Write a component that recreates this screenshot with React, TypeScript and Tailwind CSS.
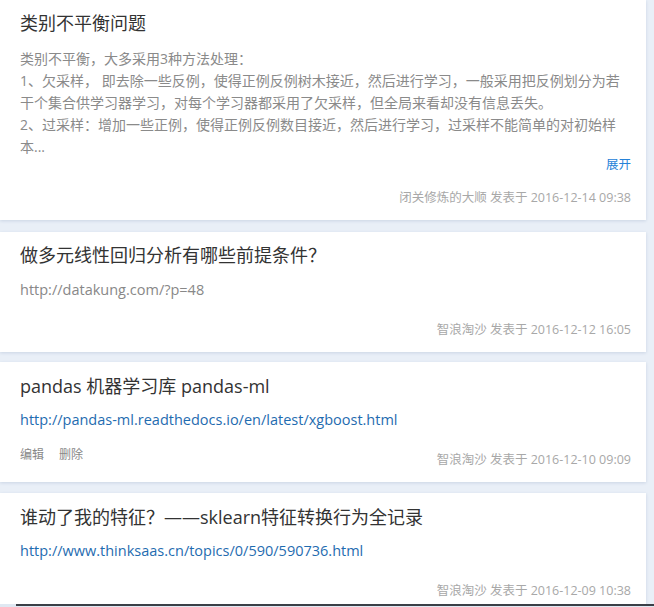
import React from "react";

const font = { fontFamily: '"Open Sans", "Noto Sans CJK SC", sans-serif' };

function Footer({ text }: { text: string }) {
  return <div className="text-[12.5px] leading-[20px] text-[#a8a8a8] text-right">{text}</div>;
}

export default function App() {
  return (
    <div className="relative w-[654px] h-[607px] overflow-hidden bg-[#e9eff7]" style={font}>
      <div className="w-[646px] flex flex-col">
        {/* Card 1 */}
        <div className="bg-white pl-5 pr-[15px] pt-[11px] pb-[12px] shadow-[0_1px_3px_rgba(30,70,130,0.15)]">
          <div className="text-[18px] leading-[25px] text-[#333333]">类别不平衡问题</div>
          <div className="mt-[12px] text-[14px] leading-[22px] text-[#8a8a8a]">
            <div>类别不平衡，大多采用3种方法处理：</div>
            <div>1、欠采样， 即去除一些反例，使得正例反例树木接近，然后进行学习，一般采用把反例划分为若干个集合供学习器学习，对每个学习器都采用了欠采样，但全局来看却没有信息丢失。</div>
            <div>2、过采样：增加一些正例，使得正例反例数目接近，然后进行学习，过采样不能简单的对初始样本...</div>
          </div>
          <div className="flex justify-end">
            <span className="text-[12.5px] leading-[14px] text-[#2582d8]">展开</span>
          </div>
          <div className="mt-[16px]">
            <Footer text="闭关修炼的大顺 发表于 2016-12-14 09:38" />
          </div>
        </div>

        {/* Card 2 */}
        <div className="mt-[12px] bg-white pl-5 pr-[15px] pt-[11px] pb-[12px] shadow-[0_1px_3px_rgba(30,70,130,0.15)]">
          <div className="text-[18px] leading-[25px] text-[#333333]">做多元线性回归分析有哪些前提条件？</div>
          <div className="mt-[12px] text-[14.5px] leading-[20px] text-[#888888]">http://datakung.com/?p=48</div>
          <div className="mt-[20px]">
            <Footer text="智浪淘沙 发表于 2016-12-12 16:05" />
          </div>
        </div>

        {/* Card 3 */}
        <div className="mt-[10px] bg-white pl-5 pr-[15px] pt-[12px] pb-[12px] shadow-[0_1px_3px_rgba(30,70,130,0.15)]">
          <div className="text-[18px] leading-[25px] text-[#333333]">pandas 机器学习库 pandas-ml</div>
          <div className="mt-[11px] text-[14.5px] leading-[20px] text-[#1f6cb0]">http://pandas-ml.readthedocs.io/en/latest/xgboost.html</div>
          <div className="mt-[15px] flex justify-between items-start">
            <div className="flex gap-[15px] text-[12px] leading-[20px] text-[#888888]">
              <span>编辑</span>
              <span>删除</span>
            </div>
            <div className="mt-[5px]">
              <Footer text="智浪淘沙 发表于 2016-12-10 09:09" />
            </div>
          </div>
        </div>

        {/* Card 4 */}
        <div className="mt-[11px] bg-white pl-5 pr-[15px] pt-[12px] pb-[12px] shadow-[0_1px_3px_rgba(30,70,130,0.15)]">
          <div className="text-[18px] leading-[25px] text-[#333333]">谁动了我的特征？——sklearn特征转换行为全记录</div>
          <div className="mt-[11px] text-[14.5px] leading-[20px] text-[#1f6cb0]">http://www.thinksaas.cn/topics/0/590/590736.html</div>
          <div className="mt-[20px]">
            <Footer text="智浪淘沙 发表于 2016-12-09 10:38" />
          </div>
        </div>
      </div>

      {/* bottom bar edge */}
      <div className="absolute left-0 right-0 top-[604px] h-[3px] bg-[#dfe8f2]">
        <div className="ml-[16px] h-[2px] bg-[#3a3f47]" />
      </div>
    </div>
  );
}
